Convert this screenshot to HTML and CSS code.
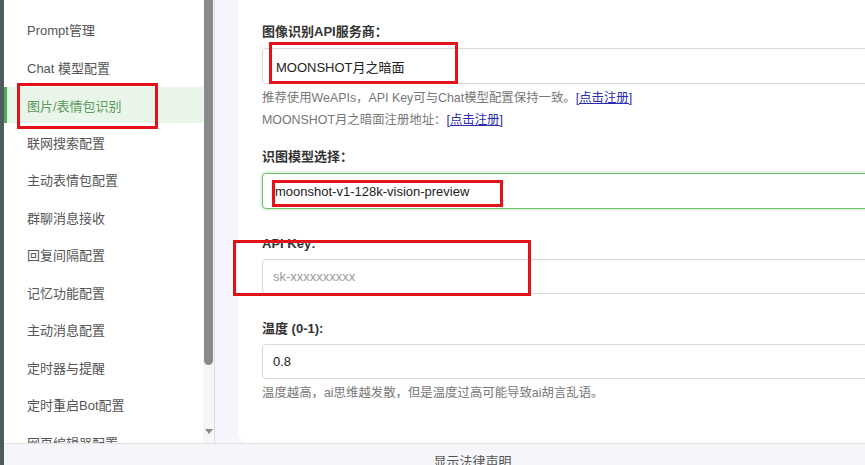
FILE: index.html
```html
<!DOCTYPE html>
<html lang="zh-CN">
<head>
  <meta charset="UTF-8">
  <meta name="viewport" content="width=device-width, initial-scale=1.0">
  <link rel="stylesheet" href="styles.css">
</head>
<body>
  <div class="app">
    <div class="edge"></div>
    <div class="page">
      <div class="top">
        <ul class="sidebar">
          <li class="nav-item">Prompt管理</li>
          <li class="nav-item">Chat 模型配置</li>
          <li class="nav-item active">图片/表情包识别</li>
          <li class="nav-item">联网搜索配置</li>
          <li class="nav-item">主动表情包配置</li>
          <li class="nav-item">群聊消息接收</li>
          <li class="nav-item">回复间隔配置</li>
          <li class="nav-item">记忆功能配置</li>
          <li class="nav-item">主动消息配置</li>
          <li class="nav-item">定时器与提醒</li>
          <li class="nav-item">定时重启Bot配置</li>
          <li class="nav-item">网页编辑器配置</li>
        </ul>
        <div class="scrollbar">
          <div class="thumb"></div>
          <div class="arrow"></div>
        </div>
        <div class="main">
          <div class="card">
            <div class="field">
              <label class="label">图像识别API服务商：</label>
              <input class="input wide" type="text" value="MOONSHOT月之暗面">
              <p class="help">推荐使用WeAPIs，API Key可与Chat模型配置保持一致。<a href="#">[点击注册]</a></p>
              <p class="help">MOONSHOT月之暗面注册地址：<a href="#">[点击注册]</a></p>
            </div>
            <div class="field">
              <label class="label">识图模型选择：</label>
              <input class="input wide focused" type="text" value="moonshot-v1-128k-vision-preview">
            </div>
            <div class="field">
              <label class="label">API Key:</label>
              <input class="input" type="text" placeholder="sk-xxxxxxxxxx">
            </div>
            <div class="field">
              <label class="label">温度 (0-1):</label>
              <input class="input" type="text" value="0.8">
              <p class="help">温度越高，ai思维越发散，但是温度过高可能导致ai胡言乱语。</p>
            </div>
          </div>
        </div>
      </div>
      <div class="footer">显示法律声明</div>
    </div>

    <!-- annotation boxes drawn over the screenshot -->
    <div class="mark mark-nav"></div>
    <div class="mark mark-provider"></div>
    <div class="mark mark-model"></div>
    <div class="mark mark-key"></div>
  </div>
</body>
</html>
```

FILE: styles.css
```css
body {
  margin: 0;
  font-family: "Liberation Sans", "Noto Sans CJK SC", sans-serif;
  overflow: hidden;
  background-color: #f4f6fb;
}

.app {
  position: relative;
  display: flex;
  width: 865px;
  height: 465px;
  overflow: hidden;
}

.edge {
  width: 4px;
  background-color: #4d5a5e;
  flex-shrink: 0;
}

.page {
  flex: 1;
  display: flex;
  flex-direction: column;
  min-width: 0;
}

.top {
  display: flex;
  height: 443px;
  flex-shrink: 0;
}

.sidebar {
  width: 199px;
  margin: 0;
  padding: 11px 0 0;
  list-style: none;
  background-color: #ffffff;
  overflow: hidden;
  flex-shrink: 0;
}

.nav-item {
  height: 37.5px;
  display: flex;
  align-items: center;
  padding-left: 23px;
  font-size: 13px;
  color: #555;
  box-sizing: border-box;
}

.nav-item.active {
  background-color: #e9f5e9;
  color: #5a9a5e;
  border-left: 3px solid #4caf50;
  padding-left: 20px;
  height: 36px;
  margin: 1px 0 0.5px;
}

.scrollbar {
  width: 11px;
  background-color: #f6f6f6;
  border-right: 1px solid #dcdcdc;
  display: flex;
  flex-direction: column;
  justify-content: space-between;
  align-items: center;
  padding-bottom: 9px;
  flex-shrink: 0;
  box-sizing: content-box;
}

.thumb {
  width: 9px;
  height: 365px;
  background-color: #8a8a8a;
  border-radius: 0 0 5px 5px;
}

.arrow {
  width: 0;
  height: 0;
  border-left: 4px solid transparent;
  border-right: 4px solid transparent;
  border-top: 5px solid #8a8a8a;
}

.main {
  flex: 1;
  padding-left: 23px;
  background-color: #f4f6fb;
  overflow: hidden;
  min-width: 0;
  display: flex;
}

.card {
  width: 700px;
  flex-shrink: 0;
  background-color: #ffffff;
  border-radius: 0 0 0 9px;
  padding: 23px 0 0 24px;
  box-sizing: border-box;
}

.field {
  display: flow-root;
  margin-bottom: 17px;
}

.label {
  display: block;
  font-size: 13px;
  line-height: 18px;
  font-weight: bold;
  color: #333;
}

.input {
  display: block;
  width: 100%;
  height: 35px;
  margin: 6px 0 9px;
  padding: 0 10px;
  box-sizing: border-box;
  border: 1px solid #d9d9d9;
  border-radius: 4px;
  font-family: inherit;
  font-size: 13px;
  color: #222;
  background-color: #ffffff;
  outline: none;
}

.input.wide {
  height: 36px;
  margin-top: 7px;
  padding-left: 13px;
}

.input::placeholder {
  color: #9a9a9a;
}

.input.focused {
  border-color: #6abf6a;
  box-shadow: 0 0 0 2px rgba(106, 191, 106, 0.18);
  padding-left: 12px;
}

.help {
  margin: -6px 0 0;
  font-size: 12.4px;
  line-height: 22px;
  color: #777;
}

.help + .help {
  margin-top: 0;
}

.help a {
  color: #2b2bb0;
  text-decoration: underline;
}

.footer {
  flex: 1;
  border-top: 1px solid #e2e2e2;
  background-color: #f5f6f9;
  font-size: 13px;
  line-height: 18px;
  color: #555;
  text-align: center;
  padding: 9px 0 0 76px;
}

.mark {
  position: absolute;
  border: 3px solid #e3121a;
  box-sizing: border-box;
}

.mark-nav {
  left: 17px;
  top: 83px;
  width: 141px;
  height: 46px;
}

.mark-provider {
  left: 269px;
  top: 42px;
  width: 189px;
  height: 42px;
}

.mark-model {
  left: 272px;
  top: 180px;
  width: 231px;
  height: 27px;
}

.mark-key {
  left: 233px;
  top: 240px;
  width: 298px;
  height: 56px;
}
```
